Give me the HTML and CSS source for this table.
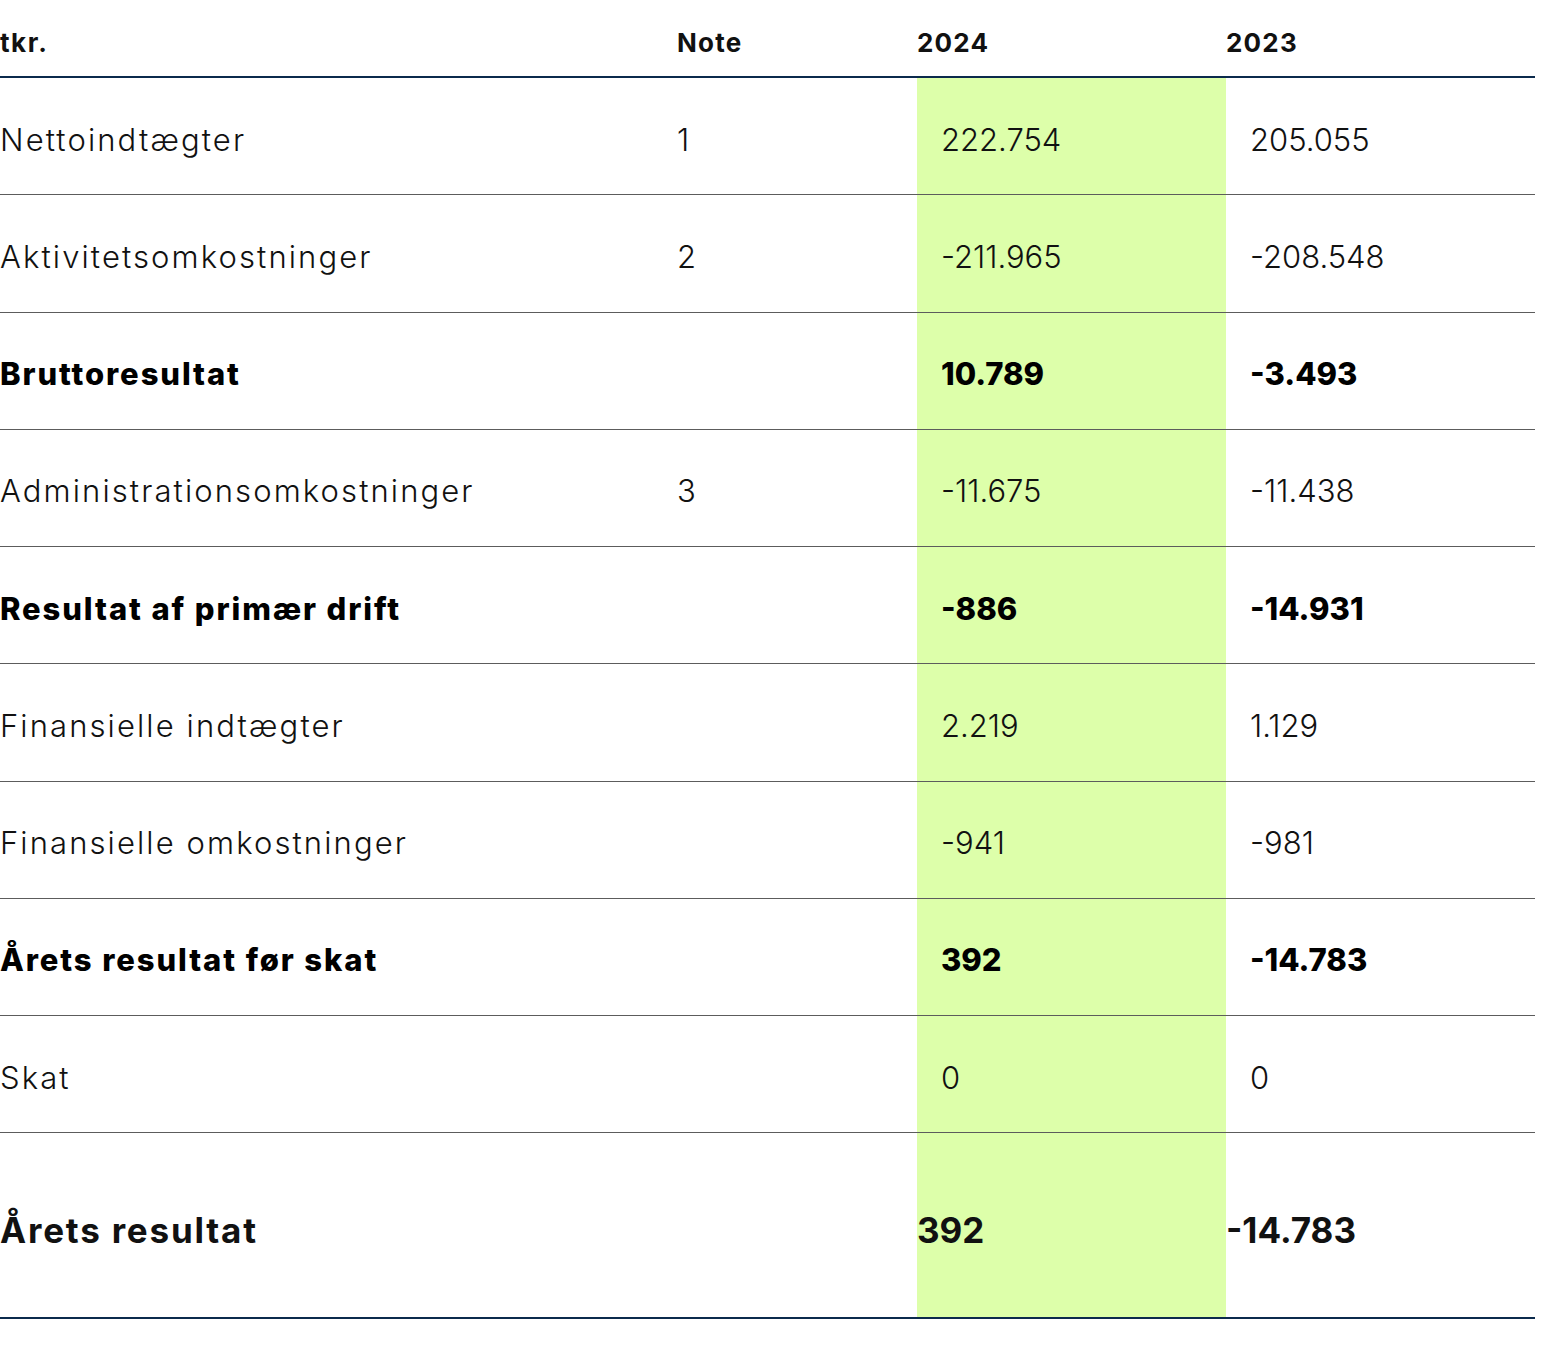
FILE: index.html
```html
<!DOCTYPE html>
<html lang="da">
<head>
<meta charset="utf-8">
<title>Resultatopgørelse</title>
<link rel="stylesheet" href="styles.css">
</head>
<body>
<div class="statement">
  <div class="row head">
    <div class="cell label">tkr.</div>
    <div class="cell note">Note</div>
    <div class="cell y24">2024</div>
    <div class="cell y23">2023</div>
  </div>
  <div class="row">
    <div class="cell label">Nettoindtægter</div>
    <div class="cell note">1</div>
    <div class="cell y24 val">222.754</div>
    <div class="cell y23 val">205.055</div>
  </div>
  <div class="row">
    <div class="cell label">Aktivitetsomkostninger</div>
    <div class="cell note">2</div>
    <div class="cell y24 val">-211.965</div>
    <div class="cell y23 val">-208.548</div>
  </div>
  <div class="row bold">
    <div class="cell label">Bruttoresultat</div>
    <div class="cell note"></div>
    <div class="cell y24 val">10.789</div>
    <div class="cell y23 val">-3.493</div>
  </div>
  <div class="row">
    <div class="cell label">Administrationsomkostninger</div>
    <div class="cell note">3</div>
    <div class="cell y24 val">-11.675</div>
    <div class="cell y23 val">-11.438</div>
  </div>
  <div class="row bold">
    <div class="cell label">Resultat af primær drift</div>
    <div class="cell note"></div>
    <div class="cell y24 val">-886</div>
    <div class="cell y23 val">-14.931</div>
  </div>
  <div class="row">
    <div class="cell label">Finansielle indtægter</div>
    <div class="cell note"></div>
    <div class="cell y24 val">2.219</div>
    <div class="cell y23 val">1.129</div>
  </div>
  <div class="row">
    <div class="cell label">Finansielle omkostninger</div>
    <div class="cell note"></div>
    <div class="cell y24 val">-941</div>
    <div class="cell y23 val">-981</div>
  </div>
  <div class="row bold">
    <div class="cell label">Årets resultat før skat</div>
    <div class="cell note"></div>
    <div class="cell y24 val">392</div>
    <div class="cell y23 val">-14.783</div>
  </div>
  <div class="row">
    <div class="cell label">Skat</div>
    <div class="cell note"></div>
    <div class="cell y24 val">0</div>
    <div class="cell y23 val">0</div>
  </div>
  <div class="row total">
    <div class="cell label">Årets resultat</div>
    <div class="cell note"></div>
    <div class="cell y24">392</div>
    <div class="cell y23">-14.783</div>
  </div>
</div>
</body>
</html>
```

FILE: styles.css
```css
html, body {
  margin: 0;
  padding: 0;
  background: #ffffff;
}

body {
  font-family: Inter, "Open Sans", "Liberation Sans", sans-serif;
  color: #111111;
}

.statement {
  width: 1535px;
}

.row {
  display: grid;
  grid-template-columns: 677px 240px 309px 309px;
  box-sizing: border-box;
  height: 117.25px;
  border-bottom: 1px solid #5c5c5c;
  font-size: 31px;
  font-weight: 300;
}

.cell {
  display: flex;
  align-items: center;
  white-space: nowrap;
  padding-top: 6px;
}

.label {
  letter-spacing: 2.1px;
}

.val {
  padding-left: 24px;
}

.y24 {
  background: #ddffaa;
}

.row.head {
  height: 78px;
  border-bottom: 2px solid #0b2a4c;
  font-size: 26px;
  font-weight: 700;
  letter-spacing: 1.2px;
}

.row.head .cell {
  align-items: flex-end;
  padding-top: 0;
  padding-bottom: 18px;
}

.row.head .label {
  letter-spacing: 1.5px;
}

.row.head .y24 {
  background: none;
}

.row.bold {
  font-weight: 800;
  color: #000000;
}

.row.bold .label {
  letter-spacing: 1.9px;
}

.row.total {
  height: 186px;
  border-bottom: 2px solid #0b2a4c;
  font-size: 35px;
  font-weight: 700;
}

.row.total .cell {
  padding-top: 10px;
}

.row.total .label {
  letter-spacing: 1.8px;
}
```
